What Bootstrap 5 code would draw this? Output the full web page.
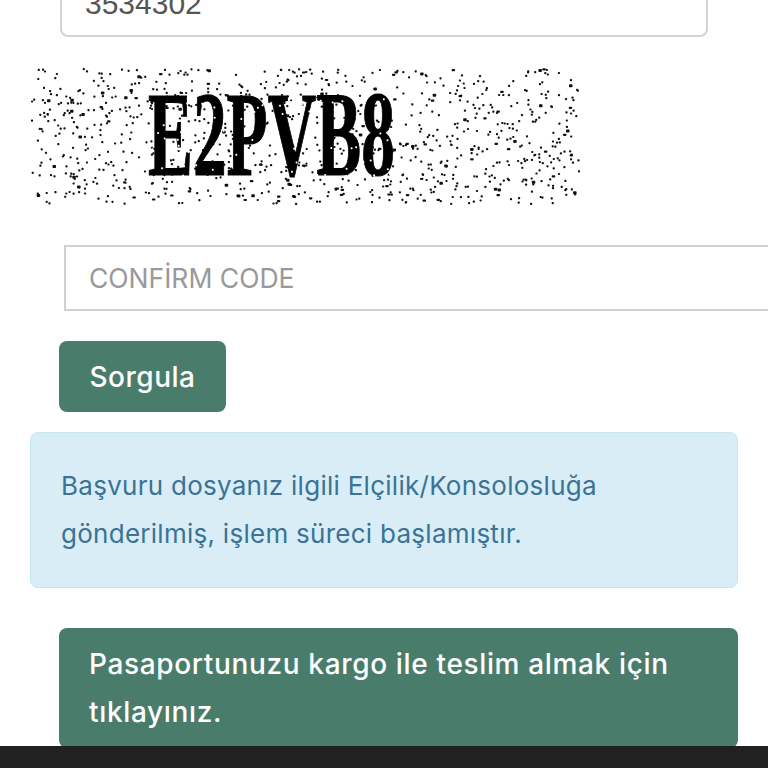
<!DOCTYPE html>
<html lang="tr">
<head>
<meta charset="utf-8">
<meta name="viewport" content="width=device-width, initial-scale=1">
<link rel="stylesheet" href="https://cdn.jsdelivr.net/npm/bootstrap@5.3.0/dist/css/bootstrap.min.css">
<style>
html, body { height: 768px; overflow: hidden; background: #fff; }
body { font-family: "Inter", "Noto Sans", sans-serif; }
.page-shell { height: 746px; overflow: hidden; }
.form-stack { margin-top: -35px; padding-left: 30px; padding-right: 30px; width: 768px; }
.tc-input { margin-left: 30px; width: 648px; height: 72px; border: 2px solid #d4d4d4; border-radius: 8px; font: 30px/1 "Liberation Sans", sans-serif; color: #555; padding: 5px 23px 0; }
.captcha-svg { display: block; margin: 30px 0 0 -2px; width: 552px; height: 138px; }
.captcha-text { font-family: "Liberation Serif", serif; font-weight: 700; fill: #000; stroke: #000; stroke-width: 1px; }
.code-input { margin: 40px 0 0 34px; width: 760px; height: 66px; border: 2px solid #d0d0d0; border-radius: 0; font-size: 26.5px; padding: 0 23px; color: #555; }
.code-input::placeholder { color: #999; opacity: 1; }
.query-btn { margin: 30px 0 0 29px; width: 167px; height: 71px; border-radius: 8px; font-size: 28px; letter-spacing: .5px; font-weight: 500; padding: 0; }
.query-btn, .cargo-btn { background: #4a7c6c; border: 0; color: #fff; }
.query-btn:hover, .cargo-btn:hover { background: #4a7c6c; color: #fff; }
.status-alert { margin: 20px 0 0; height: 156px; padding: 29px 30px; background: #d9edf7; border: 1px solid #c5e6f2; border-radius: 8px; color: #3a7396; font-size: 26px; letter-spacing: .27px; line-height: 48px; }
.cargo-btn { display: block; margin: 40px 0 0 29px; width: 679px; padding: 12px 30px; text-align: left; border-radius: 8px; font-size: 28px; letter-spacing: .65px; font-weight: 500; line-height: 48px; }
.bottom-strip { height: 22px; background: #212121; }
</style>
</head>
<body>
<div class="page-shell">
  <div class="form-stack">
    <input class="form-control tc-input" value="3534302" aria-label="Başvuru numarası">
    <svg class="captcha-svg" id="captcha" viewBox="0 0 552 138" role="img" aria-label="Doğrulama kodu">
      <g id="noise" fill="#111"></g>
      <text class="captcha-text" x="0" y="0" font-size="100" transform="translate(120 108) scale(0.66 1.2)" textLength="374" lengthAdjust="spacingAndGlyphs">E2PVB8</text>
      <g id="noise2" fill="#fff"></g>
    </svg>
    <input class="form-control code-input" placeholder="CONFİRM CODE" aria-label="Confirm code">
    <button type="button" class="btn query-btn d-block">Sorgula</button>
    <div class="alert alert-info status-alert" role="alert">Başvuru dosyanız ilgili Elçilik/Konsolosluğa gönderilmiş, işlem süreci başlamıştır.</div>
    <button type="button" class="btn cargo-btn">Pasaportunuzu kargo ile teslim almak için tıklayınız.</button>
  </div>
</div>
<div class="bottom-strip"></div>
<script>
(function () {
  var seed = 3534302;
  function rnd() { seed = (seed * 1664525 + 1013904223) >>> 0; return seed / 4294967296; }
  var ns = 'http://www.w3.org/2000/svg';
  var black = document.getElementById('noise');
  var white = document.getElementById('noise2');
  function dot(parent, x, y, w, h) {
    var r = document.createElementNS(ns, 'rect');
    r.setAttribute('x', x.toFixed(1)); r.setAttribute('y', y.toFixed(1));
    r.setAttribute('width', w); r.setAttribute('height', h); r.setAttribute('rx', 0.8);
    parent.appendChild(r);
  }
  for (var i = 0; i < 1000; i++) {
    var x = 2 + rnd() * 548, y = 1 + rnd() * 135, s = rnd();
    dot(black, x, y, s > 0.88 ? 3.5 : 2.2, s > 0.95 ? 3 : 2.2);
  }
  for (var j = 0; j < 70; j++) {
    dot(white, 122 + rnd() * 240, 30 + rnd() * 78, 2, 2);
  }
})();
</script>
<script src="https://cdn.jsdelivr.net/npm/bootstrap@5.3.0/dist/js/bootstrap.bundle.min.js"></script>
</body>
</html>
